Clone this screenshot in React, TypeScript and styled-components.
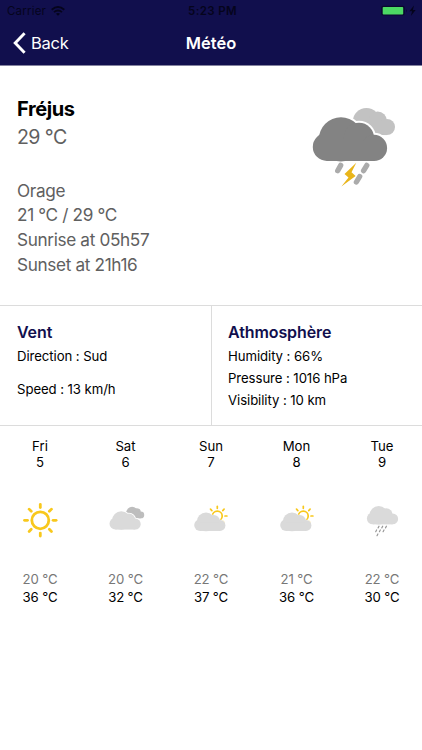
import React from "react";
import styled, { createGlobalStyle } from "styled-components";

const GlobalStyle = createGlobalStyle`
  * { box-sizing: border-box; }
  body {
    margin: 0;
    background: #fff;
    font-family: Inter, "Liberation Sans", sans-serif;
    color: #000;
    overflow: hidden;
  }
`;

const Screen = styled.main`
  width: 422px;
  height: 750px;
  background: #fff;
`;

const Header = styled.header`
  height: 66px;
  background: #110f4d;
  border-bottom: 1px solid #84839f;
`;

const StatusBar = styled.div`
  display: grid;
  grid-template-columns: 1fr auto 1fr;
  align-items: center;
  height: 22px;
  padding: 0 4px 0 7px;
  font-size: 11.5px;
  line-height: 22px;
  color: #05041c;
`;

const Carrier = styled.div`
  display: flex;
  align-items: center;
  gap: 5px;
  letter-spacing: 0.2px;
`;

const Clock = styled.div`
  font-weight: 600;
  letter-spacing: 0.35px;
`;

const Power = styled.div`
  display: flex;
  justify-content: flex-end;
  align-items: center;
`;

const NavBar = styled.nav`
  display: grid;
  grid-template-columns: 1fr auto 1fr;
  align-items: center;
  height: 42px;
  padding: 0 13px;
  color: #fff;
`;

const BackButton = styled.button`
  display: flex;
  align-items: center;
  gap: 5px;
  padding: 0;
  border: 0;
  background: none;
  color: inherit;
  font: 400 16.5px/22px Inter, sans-serif;
  letter-spacing: -0.25px;
`;

const Title = styled.h1`
  margin: 0;
  font-size: 16.5px;
  line-height: 22px;
  font-weight: 600;
  letter-spacing: 0;
`;

const Current = styled.section`
  display: flex;
  justify-content: space-between;
  height: 239px;
  padding: 28px 25px 0 17px;
  color: #606060;
`;

const City = styled.h2`
  margin: 0;
  font-size: 20px;
  line-height: 30px;
  font-weight: 700;
  letter-spacing: -0.4px;
  color: #000;
`;

const Temperature = styled.div`
  font-size: 19.6px;
  line-height: 27px;
  font-weight: 400;
  letter-spacing: -0.6px;
`;

const Details = styled.div`
  margin-top: 27.6px;
  font-size: 17.2px;
  line-height: 24.8px;
  font-weight: 400;
  letter-spacing: -0.35px;
`;

const StormArt = styled.svg`
  display: block;
  margin-top: 7px;
`;

const Conditions = styled.section`
  display: grid;
  grid-template-columns: 211px 211px;
  height: 121px;
  border-top: 1px solid #dcdcdc;
  border-bottom: 1px solid #dcdcdc;
`;

const Panel = styled.div<{ $divided?: boolean }>`
  padding: ${(p) => (p.$divided ? "15px 0 0 16px" : "15px 0 0 17px")};
  border-left: ${(p) => (p.$divided ? "1px solid #dcdcdc" : "0")};
`;

const PanelTitle = styled.h3`
  margin: 0 0 2px;
  font-size: 16px;
  line-height: 22px;
  font-weight: 600;
  letter-spacing: -0.1px;
  color: #110f4d;
`;

const Reading = styled.div<{ $gap?: number }>`
  margin-top: ${(p) => p.$gap ?? 0}px;
  font-size: 13.2px;
  line-height: 22px;
  letter-spacing: -0.08px;
`;

const Forecast = styled.section`
  display: grid;
  grid-template-columns: repeat(5, 85.5px);
  justify-content: center;
  padding-top: 12px;
`;

const Day = styled.div`
  display: flex;
  flex-direction: column;
  align-items: center;
  font-size: 13.2px;
  line-height: 16px;
`;

const DayIcon = styled.svg`
  display: block;
  margin: 25px 0;
`;

const Degrees = styled.div<{ $low?: boolean }>`
  line-height: 18px;
  letter-spacing: -0.15px;
  color: ${(p) => (p.$low ? "#777" : "#000")};
`;

const Cloud = ({ x, y, scale, fill, gap = 0 }: { x: number; y: number; scale: number; fill: string; gap?: number }) => {
  const shape = (
    <>
      <circle cx="14" cy="30" r="14" />
      <circle cx="28" cy="22.5" r="22" />
      <circle cx="46" cy="21" r="15" />
      <circle cx="61" cy="31" r="13" />
      <rect x="14" y="24" width="47" height="20" />
    </>
  );
  return (
    <g transform={`translate(${x} ${y}) scale(${scale})`}>
      {gap > 0 && <g fill="#fff" stroke="#fff" strokeWidth={gap * 2}>{shape}</g>}
      <g fill={fill}>{shape}</g>
    </g>
  );
};

const Sun = ({ x, y, radius, inner, outer, width }: { x: number; y: number; radius: number; inner: number; outer: number; width: number }) => (
  <g transform={`translate(${x} ${y})`} stroke="#f8c81c" strokeWidth={width} strokeLinecap="round" fill="none">
    <circle r={radius} />
    {[0, 45, 90, 135, 180, 225, 270, 315].map((a) => (
      <path key={a} d={`M${inner} 0H${outer}`} transform={`rotate(${a})`} />
    ))}
  </g>
);

const Clear = () => <Sun x={25.3} y={25.3} radius={8.5} inner={12.8} outer={15.8} width={2.8} />;

const Cloudy = () => (
  <>
    <Cloud x={23.7} y={11.7} scale={0.264} fill="#bdbdbd" />
    <Cloud x={8.5} y={16} scale={0.422} fill="#dadada" gap={2} />
  </>
);

const PartlySunny = () => (
  <>
    <Sun x={31.3} y={21} radius={4.9} inner={7.7} outer={9.6} width={1.7} />
    <Cloud x={8.2} y={17.4} scale={0.422} fill="#dadada" gap={0.6} />
  </>
);

const Rain = () => (
  <>
    <Cloud x={9.9} y={10.8} scale={0.422} fill="#dadada" />
    <path
      d="M22 31.2l-.9 1.7M25.7 31.2l-.9 1.7M29.4 31.2l-.9 1.7M19.6 35l-.9 1.7M23.3 35l-.9 1.7M27 35l-.9 1.7M20.9 39l-.9 1.7"
      stroke="#979797"
      strokeWidth="1.2"
      strokeLinecap="round"
    />
  </>
);

const days = [
  { name: "Fri", date: 5, low: 20, high: 36, Icon: Clear },
  { name: "Sat", date: 6, low: 20, high: 32, Icon: Cloudy },
  { name: "Sun", date: 7, low: 22, high: 37, Icon: PartlySunny },
  { name: "Mon", date: 8, low: 21, high: 36, Icon: PartlySunny },
  { name: "Tue", date: 9, low: 22, high: 30, Icon: Rain },
];

export default function App() {
  return (
    <>
      <GlobalStyle />
      <Screen>
        <Header>
          <StatusBar>
            <Carrier>
              Carrier
              <svg width="14" height="10" viewBox="0 0 14 10" fill="none" stroke="#05041c" strokeWidth="1.9">
                <path d="M.7 3.7Q7-1.7 13.3 3.7M3 6.1Q7 2.7 11 6.1" />
                <path d="M7 9.7L4.9 7.7Q7 6.1 9.1 7.7Z" fill="#05041c" stroke="none" />
              </svg>
            </Carrier>
            <Clock>5:23 PM</Clock>
            <Power>
              <svg width="37" height="12" viewBox="0 0 37 12">
                <rect x=".2" y=".8" width="23.5" height="9.8" rx="2" fill="#09082e" />
                <rect x="1.7" y="1.9" width="20.5" height="7.6" rx=".8" fill="#4cd964" />
                <path d="M25 4q1.7 1.8 0 3.6z" fill="#09082e" />
                <path d="M33 .5L28.3 6.3h2.8L29.8 11l4.9-5.9h-2.8z" fill="#05041c" />
              </svg>
            </Power>
          </StatusBar>
          <NavBar>
            <BackButton>
              <svg width="13" height="22" viewBox="0 0 13 22" fill="none" stroke="#fff" strokeWidth="2.9">
                <path d="M11.6 1.3L2.2 11l9.4 9.7" />
              </svg>
              Back
            </BackButton>
            <Title>Météo</Title>
          </NavBar>
        </Header>

        <Current>
          <div>
            <City>Fréjus</City>
            <Temperature>29 °C</Temperature>
            <Details>
              <div>Orage</div>
              <div>21 °C / 29 °C</div>
              <div>Sunrise at 05h57</div>
              <div>Sunset at 21h16</div>
            </Details>
          </div>
          <StormArt width="87" height="92" viewBox="310 101 87 92">
            <Cloud x={349} y={107.7} scale={0.622} fill="#c2c2c2" />
            <Cloud x={312.8} y={116.8} scale={1.004} fill="#838383" gap={2} />
            <path d="M340.7 165.4l-3 5.3M366.8 165.4l-3.2 5.3M359.7 176.5l-3.3 5.5" stroke="#ababab" strokeWidth="5.3" strokeLinecap="round" />
            <path d="M356.3 162.7L344.5 174l4 3.4-7.1 9L355.6 176l-4.1-3.8z" fill="#e9b51a" />
          </StormArt>
        </Current>

        <Conditions>
          <Panel>
            <PanelTitle>Vent</PanelTitle>
            <Reading>Direction : Sud</Reading>
            <Reading $gap={11}>Speed : 13 km/h</Reading>
          </Panel>
          <Panel $divided>
            <PanelTitle>Athmosphère</PanelTitle>
            <Reading>Humidity : 66%</Reading>
            <Reading>Pressure : 1016 hPa</Reading>
            <Reading>Visibility : 10 km</Reading>
          </Panel>
        </Conditions>

        <Forecast>
          {days.map(({ name, date, low, high, Icon }) => (
            <Day key={name}>
              <div>{name}</div>
              <div>{date}</div>
              <DayIcon width="50" height="50" viewBox="0 0 50 50">
                <Icon />
              </DayIcon>
              <Degrees $low>{low} °C</Degrees>
              <Degrees>{high} °C</Degrees>
            </Day>
          ))}
        </Forecast>
      </Screen>
    </>
  );
}
